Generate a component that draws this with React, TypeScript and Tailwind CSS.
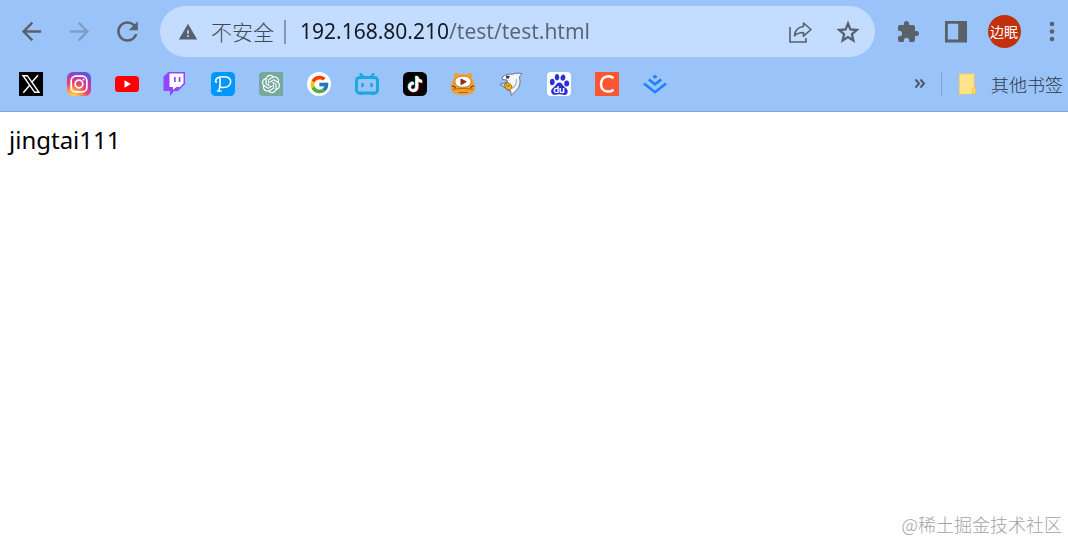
import { useState } from 'react';
import type { ReactNode } from 'react';
import { FcGoogle } from 'react-icons/fc';
import { FaTiktok } from 'react-icons/fa6';
import { MdArrowBack, MdArrowForward, MdExtension, MdRefresh, MdWarning } from 'react-icons/md';
import { RiOpenaiFill } from 'react-icons/ri';
import { SiBaidu } from 'react-icons/si';

interface Bookmark {
  name: string;
  href: string;
  icon: ReactNode;
}

function XLogo() {
  return (
    <svg className="h-6 w-6" viewBox="0 0 24 24" fill="none" stroke="#fff">
      <rect width="24" height="24" fill="#000" stroke="none" />
      <path d="M4 3.700h4.300L20 20.300h-4.300z" strokeWidth="1.400" />
      <path d="M19 3.200l-6.400 7.400M10.900 13.100L4.300 20.800" strokeWidth="1.500" />
    </svg>
  );
}

function InstagramLogo() {
  return (
    <svg className="h-6 w-6" viewBox="0 0 24 24" fill="none">
      <defs>
        <radialGradient id="ig" cx="0.25" cy="1.05" r="1.1">
          <stop offset="0" stopColor="#ffd666" />
          <stop offset="0.28" stopColor="#fba145" />
          <stop offset="0.55" stopColor="#e8436a" />
          <stop offset="0.78" stopColor="#b83bb0" />
          <stop offset="1" stopColor="#5b56d8" />
        </radialGradient>
      </defs>
      <rect width="24" height="24" rx="6" fill="url(#ig)" />
      <rect x="4.200" y="4.200" width="15.600" height="15.600" rx="4.400" stroke="#fff" strokeWidth="1.700" />
      <circle cx="12" cy="12" r="3.800" stroke="#fff" strokeWidth="1.700" />
      <circle cx="16.600" cy="7.500" r="1.100" fill="#fff" />
    </svg>
  );
}

function YoutubeLogo() {
  return (
    <svg className="h-6 w-6" viewBox="0 0 24 24">
      <rect y="4" width="24" height="16" rx="3.600" fill="#f00" />
      <path d="M9.500 8.300v7.400l6.400-3.700z" fill="#fff" />
    </svg>
  );
}

function TwitchLogo() {
  return (
    <svg className="h-6 w-6" viewBox="0 0 24 24">
      <path d="M5.500 0H22v12l-7 7h-4l-4 5v-5H.5V4.500z" fill="#9146ff" />
      <path d="M6.500 1.500h14v9.800L17 15h-3.800L10 18v-3H6.500z" fill="#fff" />
      <path d="M11 5h1.700v5H11zM15.700 5h1.700v5h-1.700z" fill="#9146ff" />
    </svg>
  );
}

function PixivLogo() {
  return (
    <svg className="h-6 w-6" viewBox="0 0 24 24" fill="none" stroke="#fff" strokeLinecap="round">
      <rect width="24" height="24" rx="4.500" fill="#0096fa" stroke="none" />
      <path d="M4.500 9.500C4.500 6.500 8 4.800 12.500 4.800c4.500 0 7.200 2 7.200 5 0 3.500-3.200 5.800-7.200 5.800-1.400 0-2.500-.3-3.200-.6" strokeWidth="1.500" />
      <path d="M9 6.500c.4 4 .2 8-1 12.300M6.500 19h3.500M4.500 9.500l1 .6" strokeWidth="1.600" />
    </svg>
  );
}

function BilibiliLogo() {
  return (
    <svg className="h-6 w-6" viewBox="0 0 24 24" fill="none" stroke="#1ba8dc" strokeLinecap="round">
      <path d="M5.500 2l3 3M18.500 2l-3 3" strokeWidth="2.400" />
      <rect x="1.500" y="5.500" width="21" height="15.500" rx="3" strokeWidth="2.900" />
      <path d="M7.500 12v2M16.500 12v2" strokeWidth="2.600" />
      <path d="M5 22.200h2M17 22.200h2" strokeWidth="1.800" />
    </svg>
  );
}

function CatLogo() {
  return (
    <svg className="h-6 w-6" viewBox="0 0 24 24">
      <path
        d="M3.500 1.500c1.600-1 3.600-.5 5 .7h7c1.400-1.200 3.400-1.700 5-.7.800 1.200.8 3 .3 4.500 1.900 2.500 3.200 6.500 3.200 10 0 5-5 7-12 7S0 21 0 16c0-3.500 1.300-7.500 3.200-10-.5-1.500-.5-3.300.3-4.500z"
        fill="#f2a12e"
      />
      <path d="M1.500 17.500c6-1.300 15-1.300 21 0M7 20.500h10" stroke="#a8611a" strokeWidth="0.900" fill="none" />
      <path d="M4 9.800c0-3.500 3-5.600 8-5.600s8 2.100 8 5.600-3 5.400-8 5.400-8-1.900-8-5.400z" fill="#fff" stroke="#a8611a" strokeWidth="0.700" />
      <path d="M10 7v5.600l5.300-2.800z" fill="#8c2f0d" stroke="#8c2f0d" strokeLinejoin="round" />
      <path d="M.8 14.500c1.500-.8 3.300 0 3.800 1.800M23.200 14.500c-1.500-.8-3.300 0-3.800 1.800" stroke="#7a4520" strokeWidth="1.300" fill="none" />
    </svg>
  );
}

function SharkLogo() {
  return (
    <svg className="h-6 w-6" viewBox="0 0 24 24" strokeLinejoin="round">
      <path
        d="M3 5.500C6 2.500 9.500 1.500 13.500 2.300 16 1 19.500 .7 23 1.800c-1.700 1.400-2.300 2.400-2.500 4 1.200 4.500.3 9-3 12.200-2 1.800-2.700 3.300-5.300 5.400l-.5-4.500c-2-.2-3.500-1-4.500-2.500L1 12.300l3-.8 4.500-1.300L8 8 3.500 7.500z"
        fill="#f4f5f7"
        stroke="#5d6473"
        strokeWidth="0.900"
      />
      <path d="M17.500 7c.5 4-1 7-4.500 9.500" stroke="#b9c0cb" strokeWidth="1.600" fill="none" />
      <path d="M7 3.500l4 .5-1.500 2.800-2.500-.5z" fill="#3a3b59" />
      <path d="M5 13c1-2.400 3.200-2.800 5.500-1.500 2 1 3 3 2 5-1 1.600-3.400 1.900-5 .8z" fill="#f4b51e" stroke="#76531c" strokeWidth="0.800" />
      <path d="M7 12.500l1.800 1.700 2.200-.7" stroke="#76531c" strokeWidth="0.900" fill="none" />
    </svg>
  );
}

function JuejinLogo() {
  return (
    <svg className="h-6 w-6" viewBox="0 0 24 24" fill="none" stroke="#1e80ff">
      <path d="M12 2.700l2.600 2L12 6.800 9.400 4.700z" fill="#1e80ff" stroke="none" />
      <path d="M5.800 7.500l6.200 4.800 6.200-4.800" strokeWidth="2.500" />
      <path d="M1 11.500l11 8.700 11-8.700" strokeWidth="2.600" />
    </svg>
  );
}

function ShareIcon() {
  return (
    <svg className="h-6 w-6" viewBox="0 0 24 24" fill="none" stroke="currentColor" strokeWidth="1.600">
      <path d="M2 7v15h16v-4" />
      <path d="M15.500 3l7.500 6.500-7.500 6.700v-3.700c-4 0-6.500.8-9 3.300.5-5 3.500-8.800 9-9.300z" strokeLinejoin="round" />
    </svg>
  );
}

function StarIcon() {
  return (
    <svg className="h-6 w-6" viewBox="0 0 24 24" fill="none" stroke="currentColor" strokeWidth="2.300">
      <path d="M12 3.500l2.400 6 6.400.5-4.900 4.200 1.500 6.300-5.400-3.400-5.400 3.400 1.500-6.300L3.200 10l6.400-.5z" />
    </svg>
  );
}

function SidePanelIcon() {
  return (
    <svg className="h-6 w-6" viewBox="0 0 24 24" fill="currentColor" fillRule="evenodd">
      <path d="M1 1h22v21.500H1zM3.800 3.800v15.800h10.400V3.800z" />
    </svg>
  );
}

function FolderIcon() {
  return (
    <svg className="h-6 w-[18px]" viewBox="0 0 18 24">
      <path d="M1 1.500h15.500V15H18v7h-2L1 22.500z" fill="#f8d25c" />
      <path d="M2 2.500h13.500V15L14 16v5.500H2z" fill="#ffe38b" />
      <path d="M14.500 22v-5l2.300-1.600.7.600v6z" fill="#fbd96a" stroke="#e6b93f" strokeWidth="0.600" />
    </svg>
  );
}

const bookmarks: Bookmark[] = [
  { name: 'X', href: '#x', icon: <XLogo /> },
  { name: 'Instagram', href: '#instagram', icon: <InstagramLogo /> },
  { name: 'YouTube', href: '#youtube', icon: <YoutubeLogo /> },
  { name: 'Twitch', href: '#twitch', icon: <TwitchLogo /> },
  { name: 'pixiv', href: '#pixiv', icon: <PixivLogo /> },
  {
    name: 'ChatGPT',
    href: '#chatgpt',
    icon: (
      <span className="flex h-6 w-6 items-center justify-center rounded-tl rounded-bl bg-[#75a99c] text-white">
        <RiOpenaiFill size={22} />
      </span>
    ),
  },
  {
    name: 'Google',
    href: '#google',
    icon: (
      <span className="flex h-6 w-6 items-center justify-center rounded-full bg-white">
        <FcGoogle size={21} />
      </span>
    ),
  },
  { name: 'bilibili', href: '#bilibili', icon: <BilibiliLogo /> },
  {
    name: 'TikTok',
    href: '#tiktok',
    icon: (
      <svg className="h-6 w-6" viewBox="0 0 24 24">
        <rect width="24" height="24" rx="5.500" fill="#000" />
        <FaTiktok x="3.500" y="3.500" size={16} color="#25f4ee" />
        <FaTiktok x="4.700" y="4.700" size={16} color="#fe2c55" />
        <FaTiktok x="4.100" y="4.100" size={16} color="#fff" />
      </svg>
    ),
  },
  { name: 'Cat video', href: '#cat', icon: <CatLogo /> },
  { name: 'Douyu', href: '#douyu', icon: <SharkLogo /> },
  {
    name: 'Baidu',
    href: '#baidu',
    icon: (
      <span className="flex h-6 w-6 items-center justify-center rounded-sm bg-white text-[#2a2fd6]">
        <SiBaidu size={21} />
      </span>
    ),
  },
  {
    name: 'CSDN',
    href: '#csdn',
    icon: (
      <svg className="h-6 w-6" viewBox="0 0 24 24" fill="none">
        <rect width="24" height="24" fill="#fc5531" />
        <path d="M18.500 6.200C17 4.800 15.500 4.200 13.500 4.200 9 4.200 6 7.500 6 12s2.800 7.600 7.200 7.600c2 0 3.800-.6 5.300-1.900" stroke="#fff" strokeWidth="2.500" />
      </svg>
    ),
  },
  { name: 'Juejin', href: '#juejin', icon: <JuejinLogo /> },
];

function ToolbarButton({ label, disabled, children }: { label: string; disabled?: boolean; children: ReactNode }) {
  return (
    <button
      type="button"
      aria-label={label}
      disabled={disabled}
      className="flex h-12 w-12 shrink-0 items-center justify-center text-[#5b6168] disabled:text-[#7f9fc8]"
    >
      {children}
    </button>
  );
}

export default function App() {
  const [url, setUrl] = useState('192.168.80.210/test/test.html');

  return (
    <div className="flex min-h-screen flex-col bg-white font-['Noto_Sans','Noto_Sans_CJK_SC',sans-serif] text-black">
      <header className="border-b border-[#84a9d8] bg-[#99c3f9]">
        <div className="flex items-center pt-1.5 pl-[7px]">
          <ToolbarButton label="后退">
            <MdArrowBack size={29} />
          </ToolbarButton>
          <ToolbarButton label="前进" disabled>
            <MdArrowForward size={29} />
          </ToolbarButton>
          <ToolbarButton label="重新加载">
            <MdRefresh size={31} />
          </ToolbarButton>

          <div className="mx-[9px] flex h-[51px] min-w-0 flex-1 items-center rounded-full bg-[#c4dcff] pl-[18px] text-[21px] text-[#56616b]">
            <MdWarning size={20} className="shrink-0" />
            <span className="ml-[13px] shrink-0 font-['Noto_Sans_CJK_SC',sans-serif] font-light text-[#3f4a55]">不安全</span>
            <span className="mx-[10px] h-6 w-0.5 shrink-0 bg-[#8298b5]" />
            <input
              type="text"
              aria-label="地址栏"
              spellCheck={false}
              value={url}
              onChange={(e) => setUrl(e.target.value)}
              className="ml-1 min-w-0 flex-1 bg-linear-to-r from-[#121a24] from-[149px] to-[#596673] to-[149px] bg-clip-text text-transparent caret-black outline-none"
            />
            <button type="button" aria-label="分享此页" className="flex h-12 w-12 shrink-0 items-center justify-center">
              <ShareIcon />
            </button>
            <button type="button" aria-label="添加书签" className="mr-[3px] flex h-12 w-12 shrink-0 items-center justify-center">
              <StarIcon />
            </button>
          </div>

          <ToolbarButton label="扩展程序">
            <MdExtension size={24} />
          </ToolbarButton>
          <ToolbarButton label="侧边栏">
            <SidePanelIcon />
          </ToolbarButton>
          <ToolbarButton label="边眠">
            <span className="flex h-[33px] w-[33px] items-center justify-center rounded-full bg-[#c2310c] pb-0.5 font-['Noto_Sans_CJK_SC',sans-serif] text-sm text-white">
              边眠
            </span>
          </ToolbarButton>
          <button type="button" aria-label="菜单" className="ml-2 flex h-12 w-8 shrink-0 items-center justify-center text-[#5b6168]">
            <svg className="h-6 w-6" viewBox="0 0 24 24" fill="currentColor">
              <circle cx="12" cy="4" r="2.300" />
              <circle cx="12" cy="11.500" r="2.300" />
              <circle cx="12" cy="19" r="2.300" />
            </svg>
          </button>
        </div>

        <nav aria-label="书签栏" className="flex h-[54px] items-center pr-[5px] pl-[19px]">
          <div className="flex flex-1 gap-6">
            {bookmarks.map((bookmark) => (
              <a key={bookmark.name} href={bookmark.href} aria-label={bookmark.name} className="shrink-0">
                {bookmark.icon}
              </a>
            ))}
          </div>
          <button type="button" aria-label="更多书签" className="flex h-8 w-6 items-center justify-center text-[#4f5a66]">
            <svg className="h-3 w-3" viewBox="0 0 12 12" fill="none" stroke="currentColor" strokeWidth="2">
              <path d="M1.500 1.500L5 5.500l-3.500 4M6.500 1.500L10 5.500l-3.500 4" />
            </svg>
          </button>
          <span className="ml-[9px] h-6 w-px bg-[#7fa6d8]" />
          <button type="button" className="ml-4 flex items-center gap-[15px] font-['Noto_Sans_CJK_SC',sans-serif] text-lg font-light text-[#2f3b47]">
            <FolderIcon />
            其他书签
          </button>
        </nav>
      </header>

      <main className="flex-1 px-[9px] pt-3 text-2xl">jingtai111</main>

      <footer className="px-1.5 pb-1 text-right font-['Noto_Sans_CJK_SC',sans-serif] text-lg font-light text-[#a3a3a3]">
        @稀土掘金技术社区
      </footer>
    </div>
  );
}
